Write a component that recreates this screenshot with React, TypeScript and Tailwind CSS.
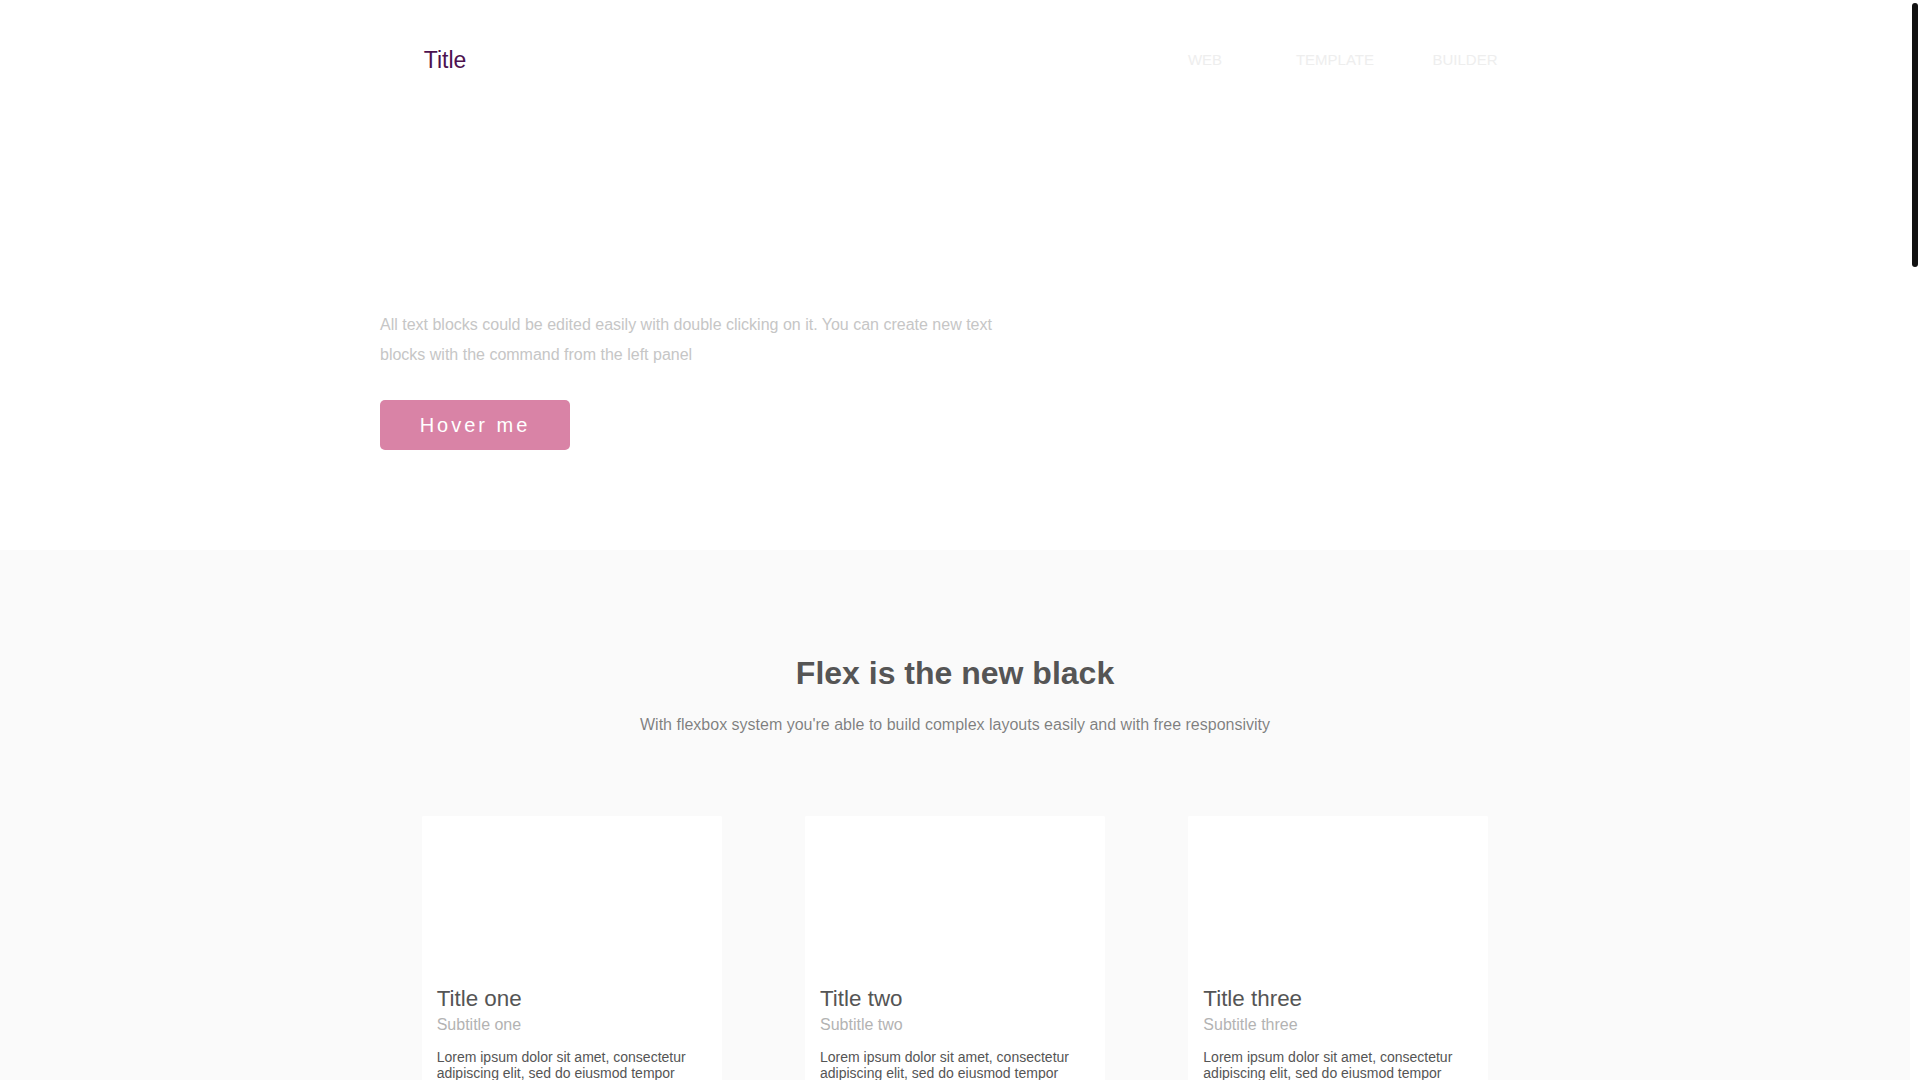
import React from "react";

const cards = [
  { title: "Title one", sub: "Subtitle one" },
  { title: "Title two", sub: "Subtitle two" },
  { title: "Title three", sub: "Subtitle three" },
  { title: "Title four", sub: "Subtitle four" },
  { title: "Title five", sub: "Subtitle five" },
  { title: "Title six", sub: "Subtitle six" },
];

const lorem =
  "Lorem ipsum dolor sit amet, consectetur adipiscing elit, sed do eiusmod tempor incididunt ut labore et dolore magna aliqua. Ut enim ad minim veniam, quis nostrud exercitation ullamco laboris nisi ut aliquip ex ea commodo consequat.";

export default function App() {
  return (
    <div className="flex bg-white font-['Liberation_Sans',Arial,Helvetica,sans-serif] leading-[normal]">
      <main className="min-w-0 flex-1">
        <header className="bg-white pt-[35px] pb-[100px] text-white">
          <div className="mx-auto w-[90%] max-w-[1150px]">
            <div className="flex items-start justify-between">
              <div className="w-1/2">
                <div className="w-[130px] min-h-[30px] rounded-[5px] bg-white p-[10px] text-center text-[23px] leading-[30px] text-[#4d114f]">
                  Title
                </div>
              </div>
              <nav className="flex w-1/2 justify-end">
                <div className="w-[130px] min-h-[50px] p-[10px] text-center text-[15px] leading-[30px] text-[#eee]">WEB</div>
                <div className="w-[130px] min-h-[50px] p-[10px] text-center text-[15px] leading-[30px] text-[#eee]">TEMPLATE</div>
                <div className="w-[130px] min-h-[50px] p-[10px] text-center text-[15px] leading-[30px] text-[#eee]">BUILDER</div>
              </nav>
            </div>
            <div className="mt-[150px] mb-[30px] text-[40px] text-white">Build your templates without coding</div>
            <div className="mb-[30px] max-w-[650px] text-base leading-[30px] text-[#c6c6c6]">
              All text blocks could be edited easily with double clicking on it. You can create new text blocks with the command from the left panel
            </div>
            <div className="w-[190px] min-h-[30px] cursor-pointer rounded-[5px] bg-[#d983a6] p-[10px] text-center text-[20px] leading-[30px] tracking-[3px] text-white">
              Hover me
            </div>
          </div>
        </header>

        <section className="bg-[#fafafa] py-[100px]">
          <div className="mx-auto w-[90%] max-w-[1150px]">
            <div className="mb-[15px] p-[5px] text-center text-[32px] leading-[36px] font-bold text-[#555]">Flex is the new black</div>
            <div className="mb-[57px] p-[5px] text-center text-base leading-[normal] text-black/50">
              With flexbox system you're able to build complex layouts easily and with free responsivity
            </div>
            <div className="flex flex-wrap justify-around py-[20px]">
              {cards.map((c) => (
                <div key={c.title} className="mb-[30px] h-[300px] w-[300px] overflow-hidden rounded-[2px] bg-white">
                  <div className="h-[155px] bg-white" />
                  <div className="px-[15px] pt-[15px] pb-[5px] text-[#555]">
                    <div className="mb-[5px] text-[22.4px] leading-[25px]">{c.title}</div>
                    <div className="mb-[15px] text-base leading-[18px] text-[#b3b3b3]">{c.sub}</div>
                    <div className="text-[14px] leading-[16px]">{lorem}</div>
                  </div>
                </div>
              ))}
            </div>
          </div>
        </section>

        <section className="h-[2780px] bg-white" />
      </main>
      <aside className="w-[10px] shrink-0 bg-white">
        <div className="mt-[3px] ml-[2px] h-[264px] w-[6px] rounded-full bg-[#111]" />
      </aside>
    </div>
  );
}
